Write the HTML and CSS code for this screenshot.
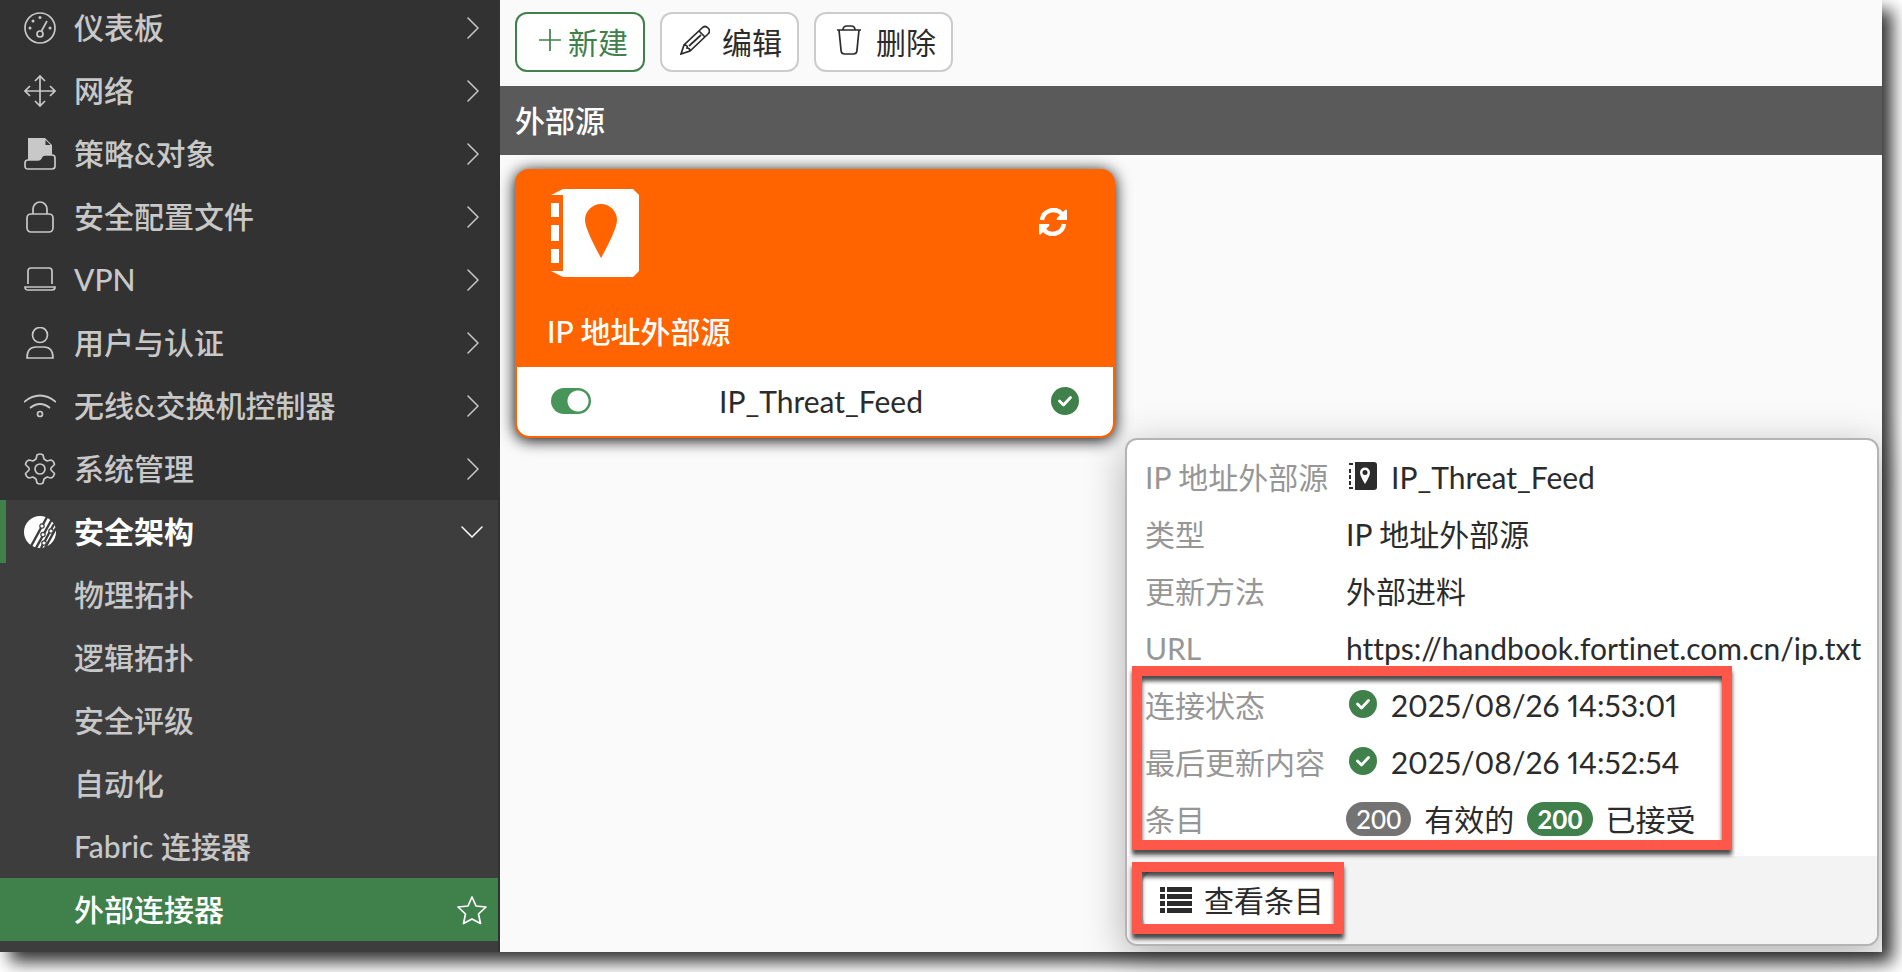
FILE: index.html
```html
<!DOCTYPE html>
<html lang="zh-CN">
<head>
  <meta charset="UTF-8">
  <meta name="viewport" content="width=device-width, initial-scale=1.0">
  <title>外部连接器</title>
  <link rel="stylesheet" href="styles.css">
</head>
<body>
  <!-- shared icons -->
  <svg class="defs" aria-hidden="true">
    <symbol id="chevron" viewBox="0 0 12 22"><path d="M1 1l10 10L1 21" fill="none" stroke="currentColor" stroke-width="1.500" stroke-linecap="round"/></symbol>
    <symbol id="check" viewBox="0 0 28 28"><circle cx="14" cy="14" r="14" fill="#3f804b"/><path d="M8.500 14l4 4 7-7.500" fill="none" stroke="#fff" stroke-width="2.800" stroke-linecap="round" stroke-linejoin="round"/></symbol>
  </svg>

  <div class="window">
    <nav class="sidebar">
      <a class="item" href="#">
        <svg class="icon" viewBox="0 0 32 32"><circle cx="16" cy="16" r="15"/><circle cx="16" cy="22" r="3"/><path d="M17.500 19L23 9"/><g class="solid"><circle cx="16" cy="5.500" r="1.500"/><circle cx="9" cy="9" r="1.500"/><circle cx="6" cy="16" r="1.500"/><circle cx="26" cy="16" r="1.500"/></g></svg>
        <span>仪表板</span><svg class="arrow"><use href="#chevron"/></svg>
      </a>
      <a class="item" href="#">
        <svg class="icon" viewBox="0 0 32 32"><path d="M16 1v30M1 16h30M11 6l5-5 5 5M11 26l5 5 5-5M6 11l-5 5 5 5M26 11l5 5-5 5"/></svg>
        <span>网络</span><svg class="arrow"><use href="#chevron"/></svg>
      </a>
      <a class="item" href="#">
        <svg class="icon" viewBox="0 0 32 32"><path class="solid" d="M4 0h17l7 7v10h-8l-2 5H4z"/><path class="cut" d="M21.500 2v5h5z"/><path d="M4 22h10q2 0 3-2 1-3 4-3h7q3 0 3 3v8q0 3-3 3H4q-3 0-3-3v-3q0-3 3-3z" class="tray"/></svg>
        <span>策略&amp;对象</span><svg class="arrow"><use href="#chevron"/></svg>
      </a>
      <a class="item" href="#">
        <svg class="icon" viewBox="0 0 32 32"><rect x="3" y="13" width="26" height="18" rx="4"/><path d="M9 13V8a7 7 0 0 1 14 0v5"/></svg>
        <span>安全配置文件</span><svg class="arrow"><use href="#chevron"/></svg>
      </a>
      <a class="item" href="#">
        <svg class="icon" viewBox="0 0 32 32"><path d="M4 20V7q0-3 3-3h18q3 0 3 3v13M1 23h30q0 3-3 3H4q-3 0-3-3z"/></svg>
        <span>VPN</span><svg class="arrow"><use href="#chevron"/></svg>
      </a>
      <a class="item" href="#">
        <svg class="icon" viewBox="0 0 32 32"><circle cx="16" cy="8" r="7.500"/><path d="M3 31q0-11 9-11h8q9 0 9 11z"/></svg>
        <span>用户与认证</span><svg class="arrow"><use href="#chevron"/></svg>
      </a>
      <a class="item" href="#">
        <svg class="icon" viewBox="0 0 32 32"><path d="M0 12q16-13 32 0M6 18q10-8 20 0"/><circle cx="16" cy="24" r="2.500"/></svg>
        <span>无线&amp;交换机控制器</span><svg class="arrow"><use href="#chevron"/></svg>
      </a>
      <a class="item" href="#">
        <svg class="icon" viewBox="0 0 32 32"><circle cx="16" cy="16" r="5"/><path d="M13 2q3-2 6 0l1 4 3 2 4-1q3 1 3.500 4.500L27 15v2l3.500 3.500Q30 24 27 25l-4-1-3 2-1 4q-3 2-6 0l-1-4-3-2-4 1q-3-1-3.500-4.500L5 17v-2l-3.500-3.500Q2 8 5 7l4 1 3-2z" stroke-linejoin="round"/></svg>
        <span>系统管理</span><svg class="arrow"><use href="#chevron"/></svg>
      </a>

      <div class="group">
        <a class="item open" href="#">
          <svg class="icon" viewBox="0 0 32 32"><circle class="solid" cx="16" cy="16" r="16"/><g class="lines"><path d="M6 32L23 1M12 32L28 3M17 32L30 8M21 32L32 12"/><g class="nodes"><circle cx="18" cy="10" r="2.200"/><circle cx="19" cy="18.500" r="2.200"/><circle cx="27" cy="15" r="2.200"/><circle cx="20" cy="27" r="2.200"/></g></g></svg>
          <span>安全架构</span><svg class="arrow down"><use href="#chevron"/></svg>
        </a>
        <a class="item sub" href="#"><span>物理拓扑</span></a>
        <a class="item sub" href="#"><span>逻辑拓扑</span></a>
        <a class="item sub" href="#"><span>安全评级</span></a>
        <a class="item sub" href="#"><span>自动化</span></a>
        <a class="item sub" href="#"><span>Fabric 连接器</span></a>
        <a class="item sub active" href="#"><span>外部连接器</span>
          <svg class="star" viewBox="0 0 30 30"><path d="M15 2l4 9 10 1-7.500 7 2 9.500L15 24l-8.500 4.500 2-9.500L1 12l10-1z"/></svg>
        </a>
      </div>
    </nav>

    <main class="main">
      <div class="toolbar">
        <button class="btn create" type="button">
          <svg class="plus" viewBox="0 0 24 24"><path d="M12 1v22M1 12h22"/></svg>新建
        </button>
        <button class="btn" type="button">
          <svg class="tool-icon" viewBox="0 0 30 30"><path d="M1 29l3-9L22 3q3-3 6 0t0 6L10 26zM4 20q4 0 3 3 3 0 3 3M19 6l6 6M9 21L21 10"/></svg>编辑
        </button>
        <button class="btn" type="button">
          <svg class="tool-icon" viewBox="0 0 30 30"><path d="M3 5h24M9 5q0-4 4-4h4q4 0 4 4M5 5l2 20q0 4 4 4h8q4 0 4-4l2-20"/></svg>删除
        </button>
      </div>

      <h2 class="section-title">外部源</h2>

      <div class="content">
        <div class="card">
          <div class="card-top">
            <div class="card-row">
              <svg class="book" viewBox="0 0 88 88"><path d="M12 0h70l6 6v76l-6 6H12L0 82h12V6H0z"/><path d="M0 14h8v14H0zM0 36h8v16H0zM0 60h8v14H0z"/><path class="hole" d="M50 69Q34 40 34 31a16 16 0 0 1 32 0Q66 40 50 69z"/></svg>
              <button class="refresh" type="button" aria-label="刷新">
                <svg viewBox="0 0 28 28"><path d="M3 12a11.500 11.500 0 0 1 20-6M25 16a11.500 11.500 0 0 1-20 6" fill="none" stroke="#fff" stroke-width="4.500"/><path d="M28 2v10H18q-1-1 0-2l8-8q1-1 2 0zM0 26V16h10q1 1 0 2l-8 8q-1 1-2 0z" fill="#fff"/></svg>
              </button>
            </div>
            <div class="card-title">IP 地址外部源</div>
          </div>
          <div class="card-bottom">
            <input class="toggle" type="checkbox" checked aria-label="IP_Threat_Feed">
            <span>IP_Threat_Feed</span>
            <svg class="check"><use href="#check"/></svg>
          </div>
        </div>
      </div>
    </main>

    <div class="popup">
      <table class="details">
        <tr>
          <th>IP 地址外部源</th>
          <td><div class="value"><svg class="check" viewBox="0 0 28 28"><path d="M6 0h19q3 0 3 3v22q0 3-3 3H6zM0 1h4v2H0zM0 7h2v4H0zM0 13h2v4H0zM0 19h2v4H0zM0 25h4v2H0z" fill="#2b2b2b"/><path d="M16 22q-5-8-5-11.500a5 5 0 0 1 10 0Q21 14 16 22z" fill="#fff"/><circle cx="16" cy="10.500" r="2.500" fill="#2b2b2b"/></svg>IP_Threat_Feed</div></td>
        </tr>
        <tr><th>类型</th><td>IP 地址外部源</td></tr>
        <tr><th>更新方法</th><td>外部进料</td></tr>
        <tr><th>URL</th><td>https://handbook.fortinet.com.cn/ip.txt</td></tr>
        <tr>
          <th>连接状态</th>
          <td><div class="value"><svg class="check"><use href="#check"/></svg>2025/08/26 14:53:01</div></td>
        </tr>
        <tr>
          <th>最后更新内容</th>
          <td><div class="value"><svg class="check"><use href="#check"/></svg>2025/08/26 14:52:54</div></td>
        </tr>
        <tr>
          <th>条目</th>
          <td><div class="counts"><span class="badge">200</span>有效的<span class="badge ok">200</span>已接受</div></td>
        </tr>
      </table>
      <div class="popup-footer">
        <button class="view" type="button">
          <svg viewBox="0 0 32 26"><path d="M0 0h5v5H0zM7 0h25v5H7zM0 7h5v5H0zM7 7h25v5H7zM0 14h5v5H0zM7 14h25v5H7zM0 21h5v5H0zM7 21h25v5H7z"/></svg>查看条目
        </button>
      </div>
      <div class="mark mark-status"></div>
      <div class="mark mark-view"></div>
    </div>
  </div>
</body>
</html>
```

FILE: styles.css
```css
* {
  box-sizing: border-box;
}
html, body {
  height: 100%;
}
body {
  margin: 0;
  padding: 0 20px 20px 0;
  background: #fff;
  color: #2b2b2b;
  font-family: Lato, 'Noto Sans CJK SC', sans-serif;
  font-size: 30px;
  line-height: 40px;
  font-variant-ligatures: none;
  font-variant-numeric: proportional-nums;
  overflow: hidden;
}
a {
  color: inherit;
  text-decoration: none;
}
button {
  font: inherit;
  color: inherit;
  cursor: pointer;
}
svg {
  flex: none;
}
.defs {
  position: absolute;
  width: 0;
  height: 0;
}
.window {
  position: relative;
  display: flex;
  height: 100%;
  background: #fafafa;
  box-shadow: 10px 10px 16px rgba(0, 0, 0, 0.8);
}

/* sidebar */
.sidebar {
  width: 500px;
  flex: none;
  padding-right: 2px;
  background: #323232;
  color: #c8c8c8;
  font-weight: 500;
  overflow: hidden;
}
.item {
  display: flex;
  align-items: center;
  height: 63px;
  padding: 0 19px 0 24px;
}
.item span {
  padding-bottom: 2px;
}
.sidebar > .item:first-child {
  height: 59px;
  padding-bottom: 4px;
}
.icon {
  width: 32px;
  height: 32px;
  margin-right: 18px;
  fill: none;
  stroke: currentColor;
  stroke-width: 1.7;
}
.icon .solid {
  fill: currentColor;
  stroke: none;
}
.icon .cut, .icon .tray {
  fill: #323232;
}
.icon .cut {
  stroke: none;
}
.icon .lines {
  stroke: #3d3d3d;
  stroke-width: 2.4;
}
.icon .nodes {
  fill: #fff;
  stroke-width: 1.2;
}
.arrow {
  width: 12px;
  height: 22px;
  margin-left: auto;
}
.arrow.down {
  transform: rotate(90deg);
}
.group {
  height: 100%;
  background: #3d3d3d;
}
.item.open {
  color: #fff;
  font-weight: bold;
  border-left: 6px solid #3f804b;
  padding: 0 20px 0 18px;
}
.item.sub {
  padding: 0 11px 0 74px;
}
.item.active {
  background: #3f804b;
  color: #fff;
}
.star {
  width: 30px;
  height: 30px;
  margin-left: auto;
  fill: none;
  stroke: #fff;
  stroke-width: 1.7;
  stroke-linejoin: round;
}

/* main area */
.main {
  flex: 1;
}
.toolbar {
  display: flex;
  gap: 15px;
  padding: 12px 15px 14px;
}
.btn {
  display: flex;
  align-items: center;
  height: 60px;
  padding: 0 15px 0 18px;
  background: #fff;
  border: 2px solid #ccc;
  border-radius: 12px;
}
.btn.create {
  padding-left: 21px;
  border-color: #3f804b;
  color: #3f804b;
}
.btn svg {
  fill: none;
  stroke: currentColor;
  stroke-width: 1.7;
}
.plus {
  width: 24px;
  height: 24px;
  margin: 0 6px 4px 0;
}
.tool-icon {
  width: 30px;
  height: 30px;
  margin: 0 12px 4px 0;
}
.section-title {
  margin: 0;
  padding: 14px 15px 15px;
  background: #5a5a5a;
  color: #fff;
  font-size: 30px;
  font-weight: 500;
}
.content {
  padding: 14px 15px;
}
.card {
  width: 600px;
  max-width: 100%;
  background: #ff6400;
  border: 2px solid #ff6400;
  border-radius: 14px;
  box-shadow: 0 2px 16px #000;
  overflow: hidden;
}
.card-top {
  height: 196px;
  padding: 18px 32px 0 34px;
  color: #fff;
  font-weight: 500;
}
.card-row {
  display: flex;
  justify-content: space-between;
  align-items: flex-start;
}
.book {
  width: 88px;
  height: 88px;
  fill: #fff;
}
.book .hole {
  fill: #ff6400;
}
.refresh {
  margin: 19px 14px 0 0;
  padding: 0;
  background: none;
  border: none;
}
.refresh svg {
  display: block;
  width: 28px;
  height: 28px;
}
.card-title {
  margin-top: 34px;
  margin-left: -4px;
}
.card-bottom {
  display: flex;
  align-items: center;
  justify-content: space-between;
  height: 69px;
  padding: 0 34px 2px;
  background: #fff;
  border-radius: 0 0 12px 12px;
}
.toggle {
  appearance: none;
  width: 40px;
  height: 26px;
  margin: 0;
  border-radius: 13px;
  background: radial-gradient(circle at 27px 13px, #fff 10px, #48955a 11px);
}
.check {
  width: 28px;
  height: 28px;
}

/* details popup */
.popup {
  position: absolute;
  right: 3px;
  bottom: 6px;
  width: 754px;
  background: #fff;
  border: 2px solid #b4b4b4;
  border-radius: 12px;
  box-shadow: 0 10px 40px rgba(0, 0, 0, 0.3);
}
.details {
  margin: 8px 18px 9px;
  border-collapse: collapse;
}
.details th, .details td {
  height: 57px;
  padding: 0;
  text-align: left;
  font-weight: normal;
  white-space: nowrap;
}
.details th {
  width: 201px;
  min-width: 201px;
  color: #969696;
}
.value, .counts {
  display: flex;
  align-items: center;
}
.value {
  gap: 14px;
  padding-left: 3px;
}
.value svg {
  margin-bottom: 2px;
}
.counts {
  gap: 13px;
}
.badge {
  padding: 0 10px;
  border-radius: 17px;
  background: #737373;
  color: #fff;
  font-size: 26px;
  font-weight: 500;
  font-variant-numeric: tabular-nums;
  line-height: 34px;
}
.badge.ok {
  background: #3f804b;
  font-weight: bold;
}
.popup-footer {
  height: 88px;
  padding: 14px;
  background: #f3f3f3;
  border-radius: 0 0 10px 10px;
}
.view {
  display: flex;
  align-items: center;
  gap: 12px;
  height: 60px;
  padding: 0 14px 0 17px;
  background: #fff;
  border: 2px solid #ccc;
  border-radius: 12px;
}
.view svg {
  width: 32px;
  height: 26px;
  fill: #2b2b2b;
}

/* red highlight frames */
.mark {
  position: absolute;
  left: 5px;
  border: 10px solid #ff584b;
  filter: drop-shadow(0 5px 2px rgba(0, 0, 0, 0.7));
  pointer-events: none;
}
.mark-status {
  width: 600px;
  height: 184px;
  bottom: 94px;
}
.mark-view {
  width: 212px;
  height: 72px;
  bottom: 10px;
}
```
